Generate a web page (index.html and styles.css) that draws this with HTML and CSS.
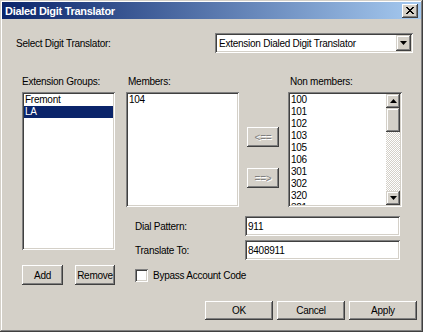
FILE: index.html
```html
<!DOCTYPE html>
<html lang="en">
<head>
  <meta charset="UTF-8" />
  <title>Dialed Digit Translator</title>
  <link rel="stylesheet" href="styles.css">
</head>
<body>
  <div class="window">
    <div class="titlebar">
      <span class="title">Dialed Digit Translator</span>
      <button class="close-btn" aria-label="Close">
        <svg width="8" height="7" viewBox="0 0 8 7"><path d="M0 0h2v1h1v1h2v-1h1v-1h2v1h-1v1h-1v1h-1v1h1v1h1v1h1v1h-2v-1h-1v-1h-2v1h-1v1h-2v-1h1v-1h1v-1h1v-1h-1v-1h-1v-1h-1z" fill="#000"/></svg>
      </button>
    </div>

    <div class="select-row">
      <label>Select Digit Translator:</label>
      <div class="combo">
        <span class="combo-text">Extension Dialed Digit Translator</span>
        <span class="combo-btn">
          <svg width="7" height="4" viewBox="0 0 7 4"><path d="M0 0h7l-3.5 4z" fill="#000"/></svg>
        </span>
      </div>
    </div>

    <div class="main">
      <div class="groups-col">
        <div class="caption">Extension Groups:</div>
        <ul class="listbox groups-list">
          <li>Fremont</li>
          <li class="selected">LA</li>
        </ul>
        <div class="group-buttons">
          <button class="btn add-btn">Add</button>
          <button class="btn remove-btn">Remove</button>
        </div>
      </div>

      <div class="detail-col">
        <div class="members-row">
          <div class="members-col">
            <div class="caption indent">Members:</div>
            <ul class="listbox members-list">
              <li>104</li>
            </ul>
          </div>
          <div class="arrows-col">
            <button class="btn arrow-btn" disabled>&lt;==</button>
            <button class="btn arrow-btn" disabled>==&gt;</button>
          </div>
          <div class="nonmembers-col">
            <div class="caption indent">Non members:</div>
            <div class="listbox scroll-list">
              <ul class="items">
                <li>100</li>
                <li>101</li>
                <li>102</li>
                <li>103</li>
                <li>105</li>
                <li>106</li>
                <li>301</li>
                <li>302</li>
                <li>320</li>
                <li>321</li>
              </ul>
              <div class="scrollbar">
                <span class="sb-btn">
                  <svg width="7" height="4" viewBox="0 0 7 4"><path d="M3.5 0l3.5 4h-7z" fill="#000"/></svg>
                </span>
                <span class="sb-thumb"></span>
                <span class="sb-track"></span>
                <span class="sb-btn">
                  <svg width="7" height="4" viewBox="0 0 7 4"><path d="M0 0h7l-3.5 4z" fill="#000"/></svg>
                </span>
              </div>
            </div>
          </div>
        </div>

        <div class="form">
          <label>Dial Pattern:</label>
          <input class="field" type="text" value="911">
          <label>Translate To:</label>
          <input class="field" type="text" value="8408911">
        </div>

        <label class="check-row">
          <span class="checkbox"></span>
          Bypass Account Code
        </label>
      </div>
    </div>

    <div class="footer">
      <button class="btn dlg-btn">OK</button>
      <button class="btn dlg-btn">Cancel</button>
      <button class="btn dlg-btn">Apply</button>
    </div>
  </div>
</body>
</html>
```

FILE: styles.css
```css
* {
  box-sizing: border-box;
  margin: 0;
  padding: 0;
}

body {
  background: #D4D0C8;
  font-family: "Liberation Sans", Arial, sans-serif;
  font-size: 10px;
  letter-spacing: -0.25px;
  color: #000;
}

.window {
  width: 423px;
  height: 332px;
  background: #D4D0C8;
  box-shadow: inset -1px -1px #404040, inset 1px 1px #D4D0C8,
              inset -2px -2px #808080, inset 2px 2px #fff;
  overflow: hidden;
}

/* Title bar */
.titlebar {
  margin: 2px 2px 0 2px;
  height: 17px;
  display: flex;
  align-items: center;
  padding: 0 3px 0 3px;
  background: linear-gradient(to right, #0A246A, #A6CAF0);
}

.title {
  color: #fff;
  font-weight: bold;
  font-size: 11px;
  letter-spacing: -0.3px;
  flex: 1;
}

.close-btn {
  width: 16px;
  height: 14px;
  border: none;
  background: #D4D0C8;
  box-shadow: inset -1px -1px #404040, inset 1px 1px #fff,
              inset -2px -2px #808080;
  display: flex;
  align-items: center;
  justify-content: center;
  padding-bottom: 1px;
}

/* Select row */
.select-row {
  margin-top: 14px;
  height: 20px;
  display: flex;
  align-items: center;
  padding-left: 16px;
}

.combo {
  margin-left: auto;
  margin-right: 10px;
  width: 198px;
  height: 20px;
  background: #fff;
  display: flex;
  align-items: center;
  padding: 2px;
  box-shadow: inset 1px 1px #808080, inset -1px -1px #fff,
              inset 2px 2px #404040, inset -2px -2px #D4D0C8;
}

.combo-text {
  flex: 1;
  padding-left: 2px;
}

.combo-btn {
  width: 15px;
  height: 16px;
  background: #D4D0C8;
  display: flex;
  align-items: center;
  justify-content: center;
  box-shadow: inset -1px -1px #404040, inset 1px 1px #D4D0C8,
              inset -2px -2px #808080, inset 2px 2px #fff;
}

/* Main area */
.main {
  display: flex;
  margin-top: 22px;
  padding-left: 22px;
}

.caption {
  height: 13px;
  line-height: 13px;
  margin-bottom: 4px;
}

.caption.indent {
  padding-left: 2px;
}

.listbox {
  list-style: none;
  background: #fff;
  padding: 2px;
  box-shadow: inset 1px 1px #808080, inset -1px -1px #fff,
              inset 2px 2px #404040, inset -2px -2px #D4D0C8;
}

.listbox li {
  height: 12px;
  line-height: 12px;
  padding-left: 1px;
}

.listbox li.selected {
  background: #0A246A;
  color: #fff;
}

.groups-col {
  width: 93px;
}

.groups-list {
  height: 158px;
}

.group-buttons {
  margin-top: 15px;
  display: flex;
  justify-content: space-between;
}

.btn {
  font-family: "Liberation Sans", Arial, sans-serif;
  font-size: 10px;
  letter-spacing: -0.25px;
  height: 20px;
  border: none;
  background: #D4D0C8;
  color: #000;
  box-shadow: inset -1px -1px #404040, inset 1px 1px #fff,
              inset -2px -2px #808080, inset 2px 2px #D4D0C8;
}

.add-btn {
  width: 41px;
}

.remove-btn {
  width: 40px;
  padding: 0;
}

.detail-col {
  margin-left: 11px;
}

.members-row {
  display: flex;
}

.members-col {
  width: 113px;
}

.members-list {
  height: 115px;
}

.arrows-col {
  width: 32px;
  margin-left: 8px;
  padding-top: 52px;
  display: flex;
  flex-direction: column;
  gap: 21px;
}

.arrow-btn {
  width: 32px;
  color: #808080;
  text-shadow: 1px 1px #fff;
}

.nonmembers-col {
  width: 114px;
  margin-left: 9px;
}

.scroll-list {
  height: 115px;
  display: flex;
}

.scroll-list .items {
  list-style: none;
  flex: 1;
  overflow: hidden;
}

.scrollbar {
  width: 14px;
  display: flex;
  flex-direction: column;
}

.sb-btn,
.sb-thumb {
  height: 14px;
  background: #D4D0C8;
  display: flex;
  align-items: center;
  justify-content: center;
  box-shadow: inset -1px -1px #404040, inset 1px 1px #D4D0C8,
              inset -2px -2px #808080, inset 2px 2px #fff;
}

.sb-thumb {
  height: 24px;
}

.sb-track {
  flex: 1;
  background: repeating-conic-gradient(#D4D0C8 0 25%, #fff 0 50%) 0 0 / 2px 2px;
}

/* Form */
.form {
  margin-top: 9px;
  display: grid;
  grid-template-columns: 119px 155px;
  row-gap: 4px;
  align-items: center;
}

.form label {
  padding-left: 9px;
}

.field {
  height: 20px;
  border: none;
  background: #fff;
  font-family: "Liberation Sans", Arial, sans-serif;
  font-size: 10px;
  letter-spacing: -0.25px;
  padding: 0 3px;
  box-shadow: inset 1px 1px #808080, inset -1px -1px #fff,
              inset 2px 2px #404040, inset -2px -2px #D4D0C8;
}

.check-row {
  margin-top: 9px;
  padding-left: 9px;
  display: flex;
  align-items: center;
  gap: 5px;
}

.checkbox {
  width: 13px;
  height: 13px;
  background: #fff;
  box-shadow: inset 1px 1px #808080, inset -1px -1px #fff,
              inset 2px 2px #404040, inset -2px -2px #D4D0C8;
}

/* Footer */
.footer {
  margin-top: 16px;
  display: flex;
  justify-content: flex-end;
  gap: 4px;
  padding-right: 6px;
}

.dlg-btn {
  width: 68px;
  height: 19px;
}
```
